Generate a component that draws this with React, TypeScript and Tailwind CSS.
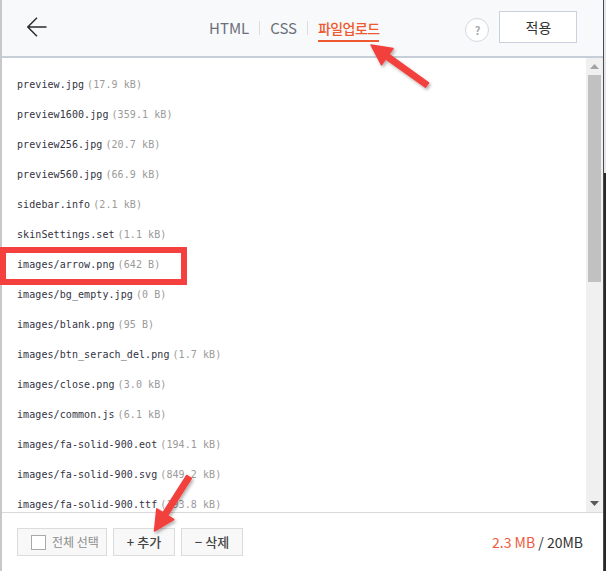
import React from "react";

const files: [string, string][] = [
  ["preview.jpg", "(17.9 kB)"],
  ["preview1600.jpg", "(359.1 kB)"],
  ["preview256.jpg", "(20.7 kB)"],
  ["preview560.jpg", "(66.9 kB)"],
  ["sidebar.info", "(2.1 kB)"],
  ["skinSettings.set", "(1.1 kB)"],
  ["images/arrow.png", "(642 B)"],
  ["images/bg_empty.jpg", "(0 B)"],
  ["images/blank.png", "(95 B)"],
  ["images/btn_serach_del.png", "(1.7 kB)"],
  ["images/close.png", "(3.0 kB)"],
  ["images/common.js", "(6.1 kB)"],
  ["images/fa-solid-900.eot", "(194.1 kB)"],
  ["images/fa-solid-900.svg", "(849.2 kB)"],
  ["images/fa-solid-900.ttf", "(193.8 kB)"],
  ["images/fa-solid-900.woff", "(98.4 kB)"],
];

function arrowPoints(sx: number, sy: number, tx: number, ty: number, w = 5.5, L = 20, H = 10) {
  const dx = tx - sx;
  const dy = ty - sy;
  const len = Math.hypot(dx, dy);
  const ux = dx / len;
  const uy = dy / len;
  const nx = -uy;
  const ny = ux;
  const bx = tx - ux * L;
  const by = ty - uy * L;
  const pts = [
    [sx + (nx * w) / 2, sy + (ny * w) / 2],
    [bx + (nx * w) / 2, by + (ny * w) / 2],
    [bx + nx * H, by + ny * H],
    [tx, ty],
    [bx - nx * H, by - ny * H],
    [bx - (nx * w) / 2, by - (ny * w) / 2],
    [sx - (nx * w) / 2, sy - (ny * w) / 2],
  ];
  return pts.map((p) => `${p[0].toFixed(1)},${p[1].toFixed(1)}`).join(" ");
}

export default function App() {
  return (
    <div className="relative w-[606px] h-[571px] flex overflow-hidden bg-white font-['Noto_Sans_CJK_KR',sans-serif]">
      <div className="flex-1 flex flex-col border-l-2 border-[#c8c8c8] bg-white min-w-0">
        {/* Header */}
        <div className="h-[58px] shrink-0 flex items-start bg-[#f8f9fb] border-b-2 border-[#c6cfd9] pl-[25px]">
          <svg className="mt-[17px] shrink-0" width="20" height="20" viewBox="0 0 20 20" fill="none">
            <path d="M19.5 10H0.8M10 0.8L0.8 10L10 19.2" stroke="#2a2a2a" strokeWidth="1.4" />
          </svg>
          <div className="ml-[162px] mt-[18px] flex items-start">
            <span className="text-[15px] leading-[20px] text-[#6b7078]">HTML</span>
            <span className="mx-[10px] mt-[3px] w-px h-[14px] bg-[#dcdcdc]" />
            <span className="text-[15px] leading-[20px] text-[#6b7078]">CSS</span>
            <span className="mx-[10px] mt-[3px] w-px h-[14px] bg-[#dcdcdc]" />
            <span className="text-[14px] leading-[20px] font-medium tracking-[-0.6px] text-[#ee5a2f] pb-[2px] border-b-2 border-[#ee5a2f]">
              파일업로드
            </span>
          </div>
          <div className="ml-[86px] mt-[18px] w-[24px] h-[24px] rounded-full border border-[#d3d8de] bg-white flex items-center justify-center text-[11px] font-bold text-[#a8a8a8] leading-none">
            ?
          </div>
          <button className="ml-[10px] mt-[11px] w-[78px] h-[32px] border border-[#c9d2dc] bg-white text-[14px] text-[#333] flex items-center justify-center">
            적용
          </button>
        </div>

        {/* List */}
        <div className="flex-1 flex min-h-0 overflow-hidden">
          <div className="flex-1 pl-[15px] pt-[11px] overflow-hidden">
            {files.map(([name, size]) => (
              <div
                key={name}
                className="h-[30px] flex items-center whitespace-nowrap font-['DejaVu_Sans_Mono',monospace] text-[10px] tracking-[0.08px]"
              >
                <span className="text-[#33333f]">{name}</span>
                <span className="ml-[3px] text-[#9a9a9a]">{size}</span>
              </div>
            ))}
          </div>
          <div className="w-[17px] shrink-0 bg-[#f0f0f0] flex flex-col items-center">
            <div className="h-[17px] w-full flex items-center justify-center">
              <svg width="9" height="5" viewBox="0 0 9 5">
                <path d="M0 5L4.5 0L9 5Z" fill="#a3a3a3" />
              </svg>
            </div>
            <div className="w-[13px] h-[207px] bg-[#c1c1c1]" />
            <div className="flex-1" />
            <div className="h-[17px] w-full flex items-center justify-center">
              <svg width="9" height="5" viewBox="0 0 9 5">
                <path d="M0 0L9 0L4.5 5Z" fill="#5a5a5a" />
              </svg>
            </div>
          </div>
        </div>

        {/* Footer */}
        <div className="h-[59px] shrink-0 border-t border-[#d9d9d9] flex items-start pt-[15px] pl-[15px] pr-[20px]">
          <button className="w-[90px] h-[28px] border border-[#dcdcdc] bg-[#f8f8f8] flex items-center pl-[13px]">
            <span className="w-[15px] h-[15px] border border-[#a9a9a9] bg-white shrink-0" />
            <span className="ml-[6px] text-[12px] text-[#8c8c8c] leading-[16px] whitespace-nowrap">전체 선택</span>
          </button>
          <button className="ml-[6px] w-[62px] h-[28px] border border-[#dcdcdc] bg-[#f8f8f8] flex items-center justify-center">
            <span className="text-[13px] leading-[16px] font-medium text-[#444] whitespace-nowrap">+ 추가</span>
          </button>
          <button className="ml-[6px] w-[62px] h-[28px] border border-[#dcdcdc] bg-[#f8f8f8] flex items-center justify-center">
            <span className="text-[13px] leading-[16px] font-medium text-[#444] whitespace-nowrap">− 삭제</span>
          </button>
          <div className="ml-auto h-[28px] flex items-center text-[14px] whitespace-nowrap">
            <span className="text-[#f05a3c]">2.3 MB</span>
            <span className="text-[#333]">&nbsp;/&nbsp;20MB</span>
          </div>
        </div>
      </div>

      {/* right edge strip */}
      <div className="w-[3px] shrink-0 flex">
        <div className="w-px bg-[#4a4a4a]" />
        <div className="flex-1 flex flex-col">
          <div className="h-[173px] bg-[#e3e7ec]" />
          <div className="flex-1 bg-[#2b2724]" />
        </div>
      </div>

      {/* annotation: red box */}
      <div className="absolute left-0 top-[247px] w-[187px] h-[38px] border-[6px] border-[#f4403f] pointer-events-none" />

      {/* annotation arrows */}
      <svg className="absolute inset-0 pointer-events-none" width="606" height="571" viewBox="0 0 606 571">
        <defs>
          <filter id="sh" x="-20%" y="-20%" width="140%" height="140%">
            <feDropShadow dx="1.5" dy="2" stdDeviation="1.5" floodColor="#000" floodOpacity="0.3" />
          </filter>
        </defs>
        <polygon
          points={arrowPoints(427, 85, 371, 45)}
          fill="#f2403e"
          stroke="#f2403e"
          strokeWidth="1.5"
          strokeLinejoin="round"
          filter="url(#sh)"
        />
        <polygon
          points={arrowPoints(189, 477, 154.5, 531)}
          fill="#f2403e"
          stroke="#f2403e"
          strokeWidth="1.5"
          strokeLinejoin="round"
          filter="url(#sh)"
        />
      </svg>
    </div>
  );
}
